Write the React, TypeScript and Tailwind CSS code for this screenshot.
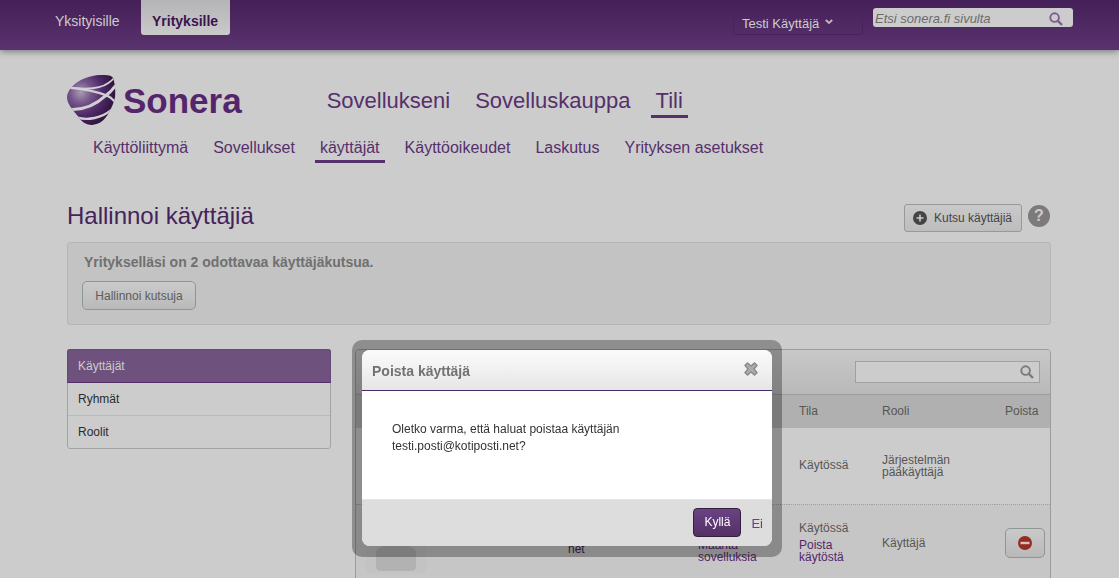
import type { ReactNode } from "react";

const mainNav = ["Sovellukseni", "Sovelluskauppa", "Tili"];
const subNav = ["Käyttöliittymä", "Sovellukset", "käyttäjät", "Käyttöoikeudet", "Laskutus", "Yrityksen asetukset"];

function SoneraMark() {
  return (
    <svg viewBox="0 0 147 153" className="h-[51px] w-[49px]" aria-hidden="true">
      <defs>
        <radialGradient id="markFill" cx="0.28" cy="0.34" r="0.74">
          <stop offset="0" stopColor="#a69bb2" />
          <stop offset="0.3" stopColor="#75548a" />
          <stop offset="0.6" stopColor="#4f2a68" />
          <stop offset="1" stopColor="#2b1038" />
        </radialGradient>
        <clipPath id="markClip">
          <path d="M0 68C1 38 40 4 98 0C118 -1 135 2 138 8C143 22 147 45 144 66C141 82 134 98 126 112C115 134 98 149 74 150C56 150 42 140 33 124C22 108 2 92 0 68Z" />
        </clipPath>
      </defs>
      <g clipPath="url(#markClip)">
        <rect width="147" height="153" fill="url(#markFill)" />
        <g fill="none" stroke="#d2d0d4">
          <path d="M6 37C50 43 100 42 124 24C132 18 137 14 142 8" strokeWidth="5" />
          <path d="M4 38C50 42 90 50 120 62C134 68 141 76 147 86" strokeWidth="7" />
          <path d="M8 103C52 106 90 86 116 62C130 52 140 40 147 30" strokeWidth="9" />
          <path d="M28 127C62 137 104 130 134 104" strokeWidth="7" />
        </g>
      </g>
    </svg>
  );
}

function SearchIcon({ className }: { className: string }) {
  return (
    <svg viewBox="0 0 14 14" className={className} fill="none" stroke="currentColor" aria-hidden="true">
      <circle cx="5.6" cy="5.6" r="4.3" strokeWidth="1.9" />
      <path d="M8.9 8.9L13 13" strokeWidth="2.4" />
    </svg>
  );
}

function TopBar() {
  return (
    <header className="relative flex h-[50px] shrink-0 items-start bg-linear-to-b from-[#451f58] to-[#5a336e] pr-[46px] pl-[45px] text-sm shadow-[0_1px_7px_rgba(0,0,0,0.45)]">
      <a href="#" className="px-[10px] py-[11px] leading-5 text-[#cccccc]">Yksityisille</a>
      <a href="#" className="ml-[11px] h-[35px] min-w-[89px] rounded-b-[3px] bg-linear-to-b from-[#b4b3b6] to-[#cacaca] px-[10px] pt-[11px] text-center leading-5 font-bold text-[#3c1350]">
        Yrityksille
      </a>
      <div className="ml-auto flex gap-[10px]">
        <button type="button" className="mt-[5px] flex h-[30px] w-[130px] items-center gap-1 rounded-[3px] border border-[#4a235d] px-2 pt-2 text-[13px] text-[#cccccc]">
          Testi Käyttäjä
          <svg viewBox="0 0 8 6" className="mb-1 ml-[2px] h-[6px] w-2" fill="none" stroke="#bdb4c2" strokeWidth="2" aria-hidden="true">
            <path d="M0.8 1L4 4L7.2 1" />
          </svg>
        </button>
        <form className="mt-2 flex h-[19px] w-[200px] items-center rounded-[3px] bg-[#cccccc] pr-[10px] pl-[2px]">
          <input aria-label="Etsi sonera.fi sivulta" placeholder="Etsi sonera.fi sivulta" className="min-w-0 flex-1 bg-transparent pt-1 text-[13px] italic outline-none placeholder:text-[#6b6b6b]" />
          <button type="button" aria-label="Etsi" className="mt-[3px]">
            <SearchIcon className="h-[14px] w-[14px] text-[#7c5c92]" />
          </button>
        </form>
      </div>
    </header>
  );
}

function NavLink({ active, children }: { active: boolean; children: ReactNode }) {
  return (
    <a href="#" className={active ? "border-b-[3px] border-[#55306b] px-[5px]" : "border-b-[3px] border-transparent px-[5px]"}>
      {children}
    </a>
  );
}

const sectionItems = ["Ryhmät", "Roolit"];

function Sidebar() {
  return (
    <nav className="w-[264px] shrink-0 self-start rounded-[3px] border border-[#a3a3a3] text-xs text-[#2b2b2b]">
      <a href="#" className="-mx-px -mt-px block h-[34px] rounded-t-[3px] border border-[#664878] border-b-[#532c68] bg-[#6e527d] pl-[10px] leading-8 text-[#cccccc]">
        Käyttäjät
      </a>
      {sectionItems.map((item) => (
        <a key={item} href="#" className="block h-[33px] border-b border-[#b9b9b9] pl-[10px] leading-8 last:h-8 last:border-0">
          {item}
        </a>
      ))}
    </nav>
  );
}

function UserTable() {
  return (
    <section className="min-w-0 flex-1 rounded-t-[4px] border border-[#9c9c9c]">
      <div className="flex h-[45px] items-center justify-end rounded-t-[3px] border-b border-[#9c9c9c] bg-linear-to-b from-[#c8c8c8] to-[#b9b9b9] pr-[10px]">
        <form className="flex h-[22px] w-[185px] items-center border border-[#a0a0a0] bg-[#cccccc] pr-[5px]">
          <input aria-label="Hae käyttäjiä" className="h-full min-w-0 flex-1 bg-transparent px-1 text-xs outline-none" />
          <button type="button" aria-label="Hae">
            <SearchIcon className="h-[14px] w-[14px] text-[#7a7a7a]" />
          </button>
        </form>
      </div>
      <table className="w-full table-fixed text-left text-xs leading-3 text-[#565656]">
        <colgroup>
          <col className="w-[80px]" />
          <col />
          <col className="w-[130px]" />
          <col className="w-[101px]" />
          <col className="w-[83px]" />
          <col className="w-[123px]" />
          <col className="w-[55px]" />
        </colgroup>
        <thead>
          <tr className="h-[33px] bg-[#b0b0b0]">
            <th aria-label="Kuva" />
            <th aria-label="Nimi" />
            <th aria-label="Sähköposti" />
            <th aria-label="Sovellukset" />
            <th className="pb-[2px] pl-[10px] font-normal">Tila</th>
            <th className="pb-[2px] pl-[10px] font-normal">Rooli</th>
            <th className="pb-[2px] pl-[10px] font-normal">Poista</th>
          </tr>
        </thead>
        <tbody>
          <tr className="h-[76px] border-b border-dotted border-[#a0a0a0]">
            <td />
            <td />
            <td />
            <td />
            <td className="pb-[2px] pl-[10px]">Käytössä</td>
            <td className="pl-[10px]">Järjestelmän<br />pääkäyttäjä</td>
            <td />
          </tr>
          <tr className="h-[77px] bg-[#c6c6c6]">
            <td className="pl-[10px]">
              <svg viewBox="0 0 60 60" className="h-[60px] w-[60px]" aria-hidden="true">
                <rect width="60" height="60" fill="#c3c3c3" />
                <circle cx="30" cy="18" r="11" fill="#b2b2b2" />
                <path d="M10 38Q13 33 22 32H38Q47 33 50 38V53Q50 58 45 58H15Q10 58 10 53Z" fill="#b2b2b2" />
              </svg>
            </td>
            <td />
            <td className="pl-[10px] text-[#3f2150]">testi.posti@kotiposti.<br />net</td>
            <td className="pl-[10px]">
              0
              <a href="#" className="mt-[5px] block text-[#55256c]">Määritä sovelluksia</a>
            </td>
            <td className="pl-[10px]">
              Käytössä
              <a href="#" className="mt-[5px] block text-[#55256c]">Poista käytöstä</a>
            </td>
            <td className="pl-[10px]">Käyttäjä</td>
            <td className="pl-[10px]">
              <button type="button" aria-label="Poista käyttäjä" className="flex h-[30px] w-10 items-center justify-center rounded-[5px] border border-[#8e9693] bg-linear-to-b from-[#c9c9c9] to-[#b9b9b9]">
                <svg viewBox="0 0 14 14" className="h-[14px] w-[14px]" aria-hidden="true">
                  <circle cx="7" cy="7" r="7" fill="#962b20" />
                  <rect x="2.5" y="5.8" width="9" height="2.4" fill="#d2c4c2" />
                </svg>
              </button>
            </td>
          </tr>
        </tbody>
      </table>
    </section>
  );
}

function ConfirmDialog() {
  return (
    <div className="fixed inset-0 flex items-start justify-center pt-[340px] pl-[15px]">
      <div className="w-[430px] rounded-[10px] bg-black/30 px-[10px] pt-[10px] pb-[11px]">
        <div role="dialog" aria-modal="true" aria-labelledby="dialog-title" className="overflow-hidden rounded-[8px] bg-white">
          <div className="flex h-[41px] items-center justify-between border-b border-[#4b2763] bg-linear-to-b from-[#fbfbfb] to-[#e6e6e6] pr-[14px] pl-[10px]">
            <h2 id="dialog-title" className="pt-[2px] text-sm font-bold text-[#727272]">Poista käyttäjä</h2>
            <button type="button" aria-label="Sulje" className="pb-[2px]">
              <svg viewBox="0 0 14 14" className="h-[14px] w-[14px]" aria-hidden="true">
                <path d="M3.4 0.9L7 4L10.6 0.9L13.1 3.4L10 7L13.1 10.6L10.6 13.1L7 10L3.4 13.1L0.9 10.6L4 7L0.9 3.4Z" fill="#ababab" stroke="#8b8b8b" strokeWidth="1.4" strokeLinejoin="round" />
              </svg>
            </button>
          </div>
          <p className="h-[108px] pt-[30px] pr-10 pl-[30px] text-xs leading-[17px] text-[#333333]">
            Oletko varma, että haluat poistaa käyttäjän
            <br />
            testi.posti@kotiposti.net?
          </p>
          <div className="flex h-[47px] items-center justify-end gap-[10px] border-t border-[#e6e6e6] bg-[#dddddd] pr-[9px] pb-[2px] text-xs">
            <button type="button" className="h-[29px] w-12 rounded-[4px] border border-[#33203d] bg-linear-to-b from-[#6a4384] to-[#543066] text-white">
              Kyllä
            </button>
            <button type="button" className="pt-1 text-[13px] text-[#6c3a8c]">Ei</button>
          </div>
        </div>
      </div>
    </div>
  );
}

export default function App() {
  return (
    <div className="flex h-screen flex-col overflow-hidden bg-[#cccccc] font-['Liberation_Sans',Arial,sans-serif]">
      <TopBar />
      <main className="shrink-0 pr-[68px] pl-[67px]">
        <div className="flex pt-[25px] text-[#55306b]">
          <a href="#" className="flex items-start text-[#55256c]" aria-label="Sonera">
            <SoneraMark />
            <span className="ml-[7px] pt-[6px] text-[35px] leading-10 font-bold">Sonera</span>
          </a>
          <nav className="ml-20 flex items-start gap-[15px] pt-3 text-[22px] leading-7">
            {mainNav.map((label) => (
              <NavLink key={label} active={label === "Tili"}>{label}</NavLink>
            ))}
          </nav>
        </div>
        <nav className="mt-[10px] ml-[21px] flex gap-[15px] text-base leading-6 text-[#55306b]">
          {subNav.map((label) => (
            <NavLink key={label} active={label === "käyttäjät"}>{label}</NavLink>
          ))}
        </nav>
        <div className="mt-[39px] flex h-[30px] items-start justify-between">
          <h1 className="text-2xl leading-7 text-[#45235a]">Hallinnoi käyttäjiä</h1>
          <div className="flex items-start gap-[6px]">
            <button type="button" className="mt-[2px] flex h-7 w-[118px] items-center gap-[7px] rounded-[3px] border border-[#999999] bg-linear-to-b from-[#c9c9c9] to-[#bdbdbd] pl-2 text-xs text-[#454545]">
              <svg viewBox="0 0 14 14" className="h-[14px] w-[14px]" aria-hidden="true">
                <circle cx="7" cy="7" r="7" fill="#454545" />
                <path d="M7 3.5V10.5M3.5 7H10.5" stroke="#cccccc" strokeWidth="1.6" />
              </svg>
              Kutsu käyttäjiä
            </button>
            <button type="button" aria-label="Ohje" className="mt-[3px] mr-px h-[22px] w-[22px] rounded-full bg-[#7b7b7b] text-base leading-[22px] font-bold text-[#cccccc]">?</button>
          </div>
        </div>
        <section className="mt-[10px] h-[83px] rounded-[3px] border border-[#b5b5b5] bg-[#c3c3c3] px-[14px] pt-[10px]">
          <p className="pl-[2px] text-sm leading-[18px] font-bold text-[#707070]">Yritykselläsi on 2 odottavaa käyttäjäkutsua.</p>
          <button type="button" className="mt-[10px] h-[29px] w-[114px] rounded-[5px] border border-[#8e9693] bg-linear-to-b from-[#cacaca] to-[#bababa] text-xs text-[#5c5c5c]">
            Hallinnoi kutsuja
          </button>
        </section>
        <div className="mt-6 flex gap-6">
          <Sidebar />
          <UserTable />
        </div>
      </main>
      <ConfirmDialog />
    </div>
  );
}
